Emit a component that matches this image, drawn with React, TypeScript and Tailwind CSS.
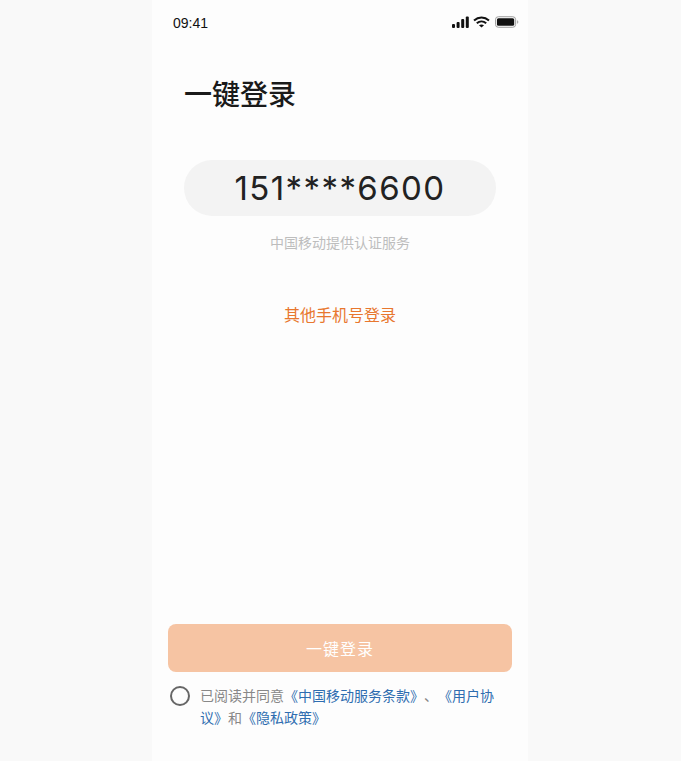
export default function App() {
  const font = { fontFamily: '"Noto Sans CJK SC", "Inter", sans-serif' };
  return (
    <div className="w-[681px] h-[761px] bg-[#f9f9f9] flex overflow-hidden [text-spacing-trim:space-all]" style={font}>
      <div className="ml-[152px] w-[376px] h-[761px] bg-[#fdfdfd] flex flex-col">
        <div className="h-[44px] shrink-0 flex items-center justify-between pl-[21px] pr-[9px]">
          <span className="pt-[2px] text-[14px] leading-none text-[#111]" style={{ fontFamily: '"Liberation Sans", sans-serif' }}>09:41</span>
          <div className="flex items-center gap-[3px]">
            <svg width="18" height="12" viewBox="0 0 18 12" fill="#111">
              <rect x="0" y="8" width="3" height="4" rx="1" />
              <rect x="4.6" y="6" width="3" height="6" rx="1" />
              <rect x="9.2" y="3" width="3" height="9" rx="1" />
              <rect x="13.8" y="0.5" width="3" height="11.5" rx="1" />
            </svg>
            <svg width="17" height="12" viewBox="0 0 17 12" fill="none" stroke="#111" strokeWidth="2">
              <path d="M1 4.5C5.5 0.5 11.5 0.5 16 4.5" />
              <path d="M3.8 7.3C6.6 4.9 10.4 4.9 13.2 7.3" />
              <path d="M8.5 11.6L6 9.3C7.4 8.2 9.6 8.2 11 9.3Z" fill="#111" stroke="none" />
            </svg>
            <svg width="24" height="12" viewBox="0 0 25 12" className="ml-[2px]">
              <rect x="0.5" y="0.5" width="21" height="11" rx="3" fill="none" stroke="#999" />
              <rect x="2" y="2" width="18" height="8" rx="1.6" fill="#111" />
              <path d="M23 4.2C23.8 4.5 24.3 5.2 24.3 6C24.3 6.8 23.8 7.5 23 7.8Z" fill="#aaa" />
            </svg>
          </div>
        </div>

        <h1 className="mt-[29px] ml-[32px] text-[28px] leading-[40px] font-medium text-[#1a1a1a]">一键登录</h1>

        <div className="mt-[47px] mx-[32px] h-[56px] rounded-full bg-[#f3f3f3] flex items-center justify-center">
          <span className="text-[33px] leading-none tracking-[1.4px] text-[#222]" style={{ fontFamily: 'Inter, sans-serif' }}>151****6600</span>
        </div>

        <p className="mt-[16px] text-center text-[14px] leading-[20px] text-[#bdbdbd]">中国移动提供认证服务</p>

        <p className="mt-[50px] text-center text-[16px] leading-[24px] text-[#e8772e]">其他手机号登录</p>

        <div className="flex-1" />

        <button className="mx-[16px] h-[48px] rounded-[8px] bg-[#f6c4a3] text-white text-[16px] tracking-[1px] flex items-center justify-center">一键登录</button>

        <div className="mt-[12px] mb-[33px] ml-[18px] mr-[30px] flex items-start gap-[10px]">
          <div className="mt-[2px] w-[20px] h-[20px] shrink-0 rounded-full border-[2px] border-[#666]" />
          <p className="text-[14px] leading-[22px] text-[#888]">
            已阅读并同意<span className="text-[#2f6db0]">《中国移动服务条款》</span>、<span className="text-[#2f6db0]">《用户协议》</span>和<span className="text-[#2f6db0]">《隐私政策》</span>
          </p>
        </div>
      </div>
    </div>
  );
}
